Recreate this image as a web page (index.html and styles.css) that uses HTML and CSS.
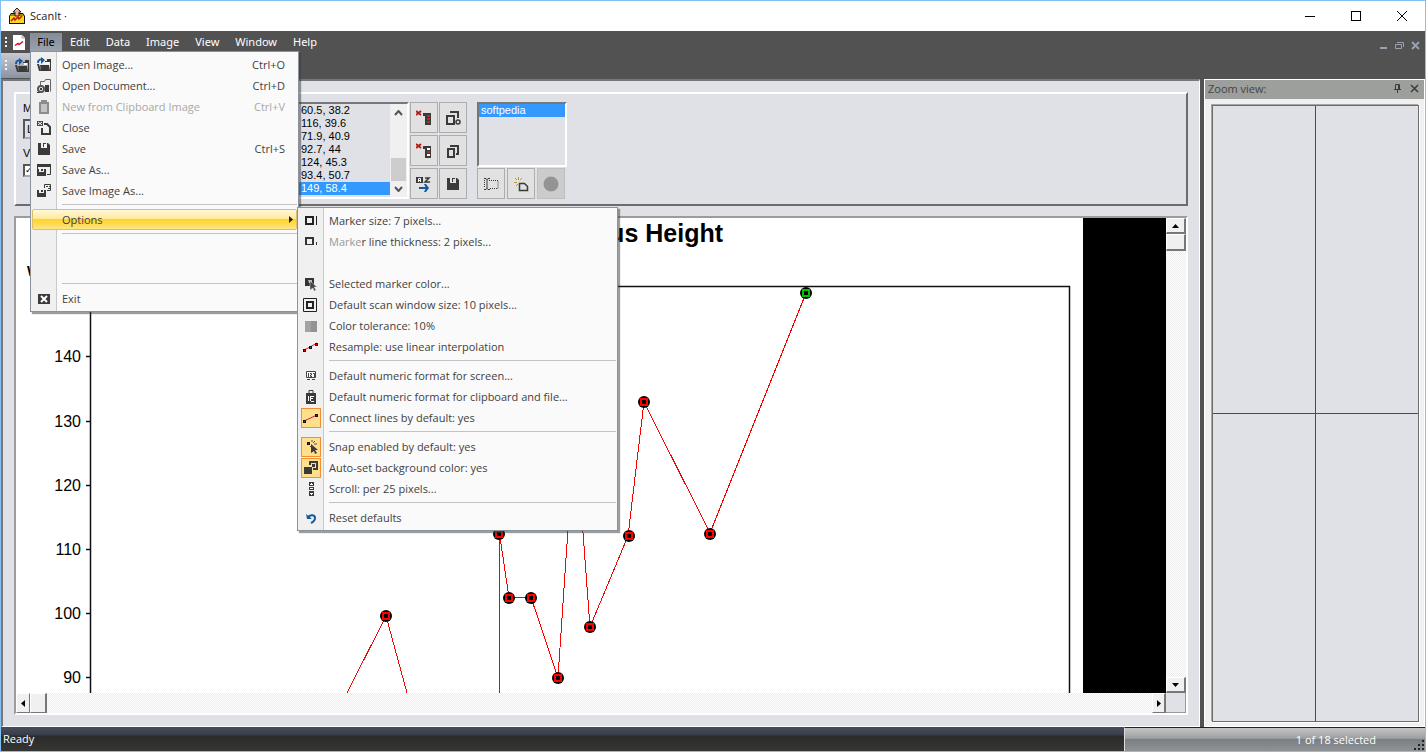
FILE: index.html
```html
<!DOCTYPE html>
<html lang="en">

<head>
    <meta charset="utf-8">
    <title>ScanIt</title>
    <link rel="stylesheet" href="styles.css">
</head>

<body>
    <div class="window">
        <header class="titlebar">
            <svg class="appicon" width="18" height="18" viewBox="0 0 18 18">
                <path d="M3 6h12l2 3v8H1V9z" fill="#111" />
                <path d="M3 7h12l1 2H2z" fill="#a08a10" />
                <rect x="2" y="9" width="14" height="7" fill="#f4dc1c" />
                <path d="M9 1l4 4h-2v4H7V5H5z" fill="#f3b08c" stroke="#222" />
                <path d="M3 14l3-3 1 2 3-3 1 2 3-3" fill="none" stroke="#d01010" stroke-width="1.5" />
            </svg>
            <span class="title">ScanIt ·</span>
            <div class="wincontrols">
                <button aria-label="Minimize"><svg width="12" height="12"><path d="M1 6.5h10" /></svg></button>
                <button aria-label="Maximize"><svg width="12" height="12"><rect x="1.500" y="1.500" width="9" height="9" /></svg></button>
                <button aria-label="Close"><svg width="12" height="12"><path d="M1 1l10 10M11 1L1 11" /></svg></button>
            </div>
        </header>

        <nav class="menubar">
            <span class="grip"></span>
            <svg class="docicon" width="12" height="15">
                <path d="M0 0h9l3 3v12H0z" fill="#fff" />
                <path d="M9 0v3h3" fill="none" stroke="#aaa" />
                <path d="M2 10.500l3-2 1 1 4-3" fill="none" stroke="#d01020" stroke-width="1.500" />
            </svg>
            <div class="filemenu">
                <button class="active">File</button>
                <ul class="menu">
                    <li><button class="item">
                        <svg class="icon" viewBox="0 0 16 16"><path d="M1 7h2l2 7H3zM4 8h9l1 6H5z" fill="#3a3a3a" /><path d="M9 5V4h2V2h4v12h-1V5z" fill="#3a3a3a" /><path d="M10 5h3v2h-3z" fill="#fafafa" /><path d="M2 6c0-4 3-4 5-3" fill="none" stroke="#1259a0" stroke-width="2" /><path d="M5 0l4 3-4 4z" fill="#1259a0" /></svg>
                        <span>Open Image...</span><kbd>Ctrl+O</kbd></button></li>
                    <li><button class="item">
                        <svg class="icon" viewBox="0 0 16 16"><path d="M4.500 8V3.500h4l1-2h5v12" fill="none" stroke="#666" /><path d="M9 7h4v7H9z" fill="#3a3a3a" /><circle cx="5" cy="11" r="3" fill="none" stroke="#555" stroke-width="2" /><path d="M4 10h2v2H4zM1 14h3v1H1z" fill="#3a3a3a" /></svg>
                        <span>Open Document...</span><kbd>Ctrl+D</kbd></button></li>
                    <li><button class="item" disabled>
                        <svg class="icon" viewBox="0 0 16 16"><path d="M4 4h8v10H4z" fill="#c4c4c4" stroke="#8c8c8c" stroke-width="2" /><path d="M6 4V2h4v2" fill="none" stroke="#8c8c8c" stroke-width="2" /></svg>
                        <span>New from Clipboard Image</span><kbd>Ctrl+V</kbd></button></li>
                    <li><button class="item">
                        <svg class="icon" viewBox="0 0 16 16"><path d="M1 1h6v5H1z" fill="#444" /><path d="M2 2l4 3M6 2L2 5" stroke="#fff" /><path d="M6 8v6h8V7l-3-3H8" fill="none" stroke="#3a3a3a" stroke-width="2" /></svg>
                        <span>Close</span></button></li>
                    <li><button class="item">
                        <svg class="icon" viewBox="0 0 16 16"><path d="M2 2h3v5h6V2h1l2 2v10H2zM7 2h3v4H7z" fill="#3a3a3a" fill-rule="evenodd" /><path d="M8 3h2v3H8z" fill="#fafafa" /></svg>
                        <span>Save</span><kbd>Ctrl+S</kbd></button></li>
                    <li><button class="item">
                        <svg class="icon" viewBox="0 0 16 16"><path d="M1 2h14v3H1z" fill="#3a3a3a" /><path d="M1.500 3v4M14.500 3v9.500H11" fill="none" stroke="#3a3a3a" /><path d="M1 7h2v3h5V7h2v7H1zM5 7h2v2H5z" fill="#3a3a3a" /></svg>
                        <span>Save As...</span></button></li>
                    <li><button class="item">
                        <svg class="icon" viewBox="0 0 16 16"><path d="M1 7h2v3h5V7h2v7H1zM5 7h2v2H5z" fill="#3a3a3a" /><path d="M8.500 5V1.500h6v6H11" fill="none" stroke="#3a3a3a" /><path d="M10 3h2v1h-2zM12 5h2v1h-2zM13 3h1v1h-1z" fill="#3a3a3a" /></svg>
                        <span>Save Image As...</span></button></li>
                    <li class="sep"></li>
                    <li class="parent"><button class="item selected"><span>Options</span>
                            <svg class="arrow" width="4" height="7"><path d="M0 0v7l4-3.500z" /></svg></button>
                        <ul class="menu submenu">
                            <li><button class="item">
                                <svg class="icon" viewBox="0 0 16 16"><path d="M3 4h7v7H3z" fill="none" stroke="#222" stroke-width="2" /><path d="M13 3h1v9h-1z" fill="#222" /></svg>
                                <span>Marker size: 7 pixels...</span></button></li>
                            <li><button class="item">
                                <svg class="icon" viewBox="0 0 16 16"><path d="M3 10V4h7v6" fill="none" stroke="#333" stroke-width="2" /><path d="M2 10h9v1H2zM13 8h1v3h-1z" fill="#333" /></svg>
                                <span><span class="faint">Marke</span>r line thickness: 2 pixels...</span></button></li>
                            <li class="blank"></li>
                            <li><button class="item">
                                <svg class="icon" viewBox="0 0 16 16"><path d="M2 2h9v8H2z" fill="#333" /><path d="M5 4h4v3H6z" fill="#bbb" /><path d="M7 5l7 6h-3l2 3-2 1-1-3-3 2z" fill="#444" stroke="#ddd" stroke-width=".5" /></svg>
                                <span>Selected marker color...</span></button></li>
                            <li><button class="item">
                                <svg class="icon" viewBox="0 0 16 16"><path d="M.5 1.500h13v13H.5z" fill="none" stroke="#222" /><path d="M4 5h6v6H4z" fill="none" stroke="#222" stroke-width="2" /></svg>
                                <span>Default scan window size: 10 pixels...</span></button></li>
                            <li><button class="item">
                                <svg class="icon" viewBox="0 0 16 16"><path d="M2 3h6v11H2z" fill="#a2a2a2" /><path d="M8 3h6v11H8z" fill="#939393" /></svg>
                                <span>Color tolerance: 10%</span></button></li>
                            <li><button class="item">
                                <svg class="icon" viewBox="0 0 16 16"><path d="M1 11l6-3 7-4" stroke="#e8103c" fill="none" /><path d="M0 10h3v3H0zM6 7h3v3H6zM12 4h3v3h-3z" fill="#111" /><path d="M1 11h1v1H1zM7 8h1v1H7zM13 5h1v1h-1z" fill="#e00" /></svg>
                                <span>Resample: use linear interpolation</span></button></li>
                            <li class="sep"></li>
                            <li><button class="item">
                                <svg class="icon" viewBox="0 0 16 16"><path d="M3.500 3.500h9v6h-9z" fill="#fff" stroke="#444" /><path d="M5.500 5v4M7 5.500h1.500v1.500H7.500v1.500H9M10 5.500h1.500V9" fill="none" stroke="#444" /><path d="M4 11h3v1H4zM9 11h3v1H9z" fill="#444" /></svg>
                                <span>Default numeric format for screen...</span></button></li>
                            <li><button class="item">
                                <svg class="icon" viewBox="0 0 16 16"><path d="M3 4h10v11H3z" fill="#3a3a3a" /><path d="M6 4V1.500h4V4" fill="none" stroke="#3a3a3a" /><path d="M5.500 7v5M7 7.500h4M7.500 8v4M8 9.500h2M8 12.500h3" fill="none" stroke="#fff" /></svg>
                                <span>Default numeric format for clipboard and file...</span></button></li>
                            <li><button class="item checked">
                                <svg class="icon" viewBox="0 0 16 16"><path d="M1 11l13-6" stroke="#e8103c" /><path d="M0 10h3v3H0zM12 4h3v3h-3z" fill="#111" /><path d="M1 11h1v1H1zM13 5h1v1h-1z" fill="#e00" /></svg>
                                <span>Connect lines by default: yes</span></button></li>
                            <li class="sep"></li>
                            <li><button class="item checked">
                                <svg class="icon" viewBox="0 0 16 16"><path d="M4 3h3v3H4z" fill="#111" /><path d="M5 4h1v1H5z" fill="#e00" /><path d="M9 1v2M12 2l-2 2M11 5h3M8 7l-1 1" stroke="#555" /><path d="M8 5l7 6h-3l2 3-2 1-1-3-3 2z" fill="#3a3a3a" /></svg>
                                <span>Snap enabled by default: yes</span></button></li>
                            <li><button class="item checked">
                                <svg class="icon" viewBox="0 0 16 16"><path d="M7 5V2h7v7h-4" fill="none" stroke="#3a3a3a" stroke-width="2" /><path d="M9 4h3v3H9z" fill="#3a3a3a" /><path d="M1 7h8v7H1z" fill="#3a3a3a" /></svg>
                                <span>Auto-set background color: yes</span></button></li>
                            <li><button class="item">
                                <svg class="icon" viewBox="0 0 16 16"><path d="M6 1h5v4H6zM6 6h5v3H6zM6 10h5v5H6z" fill="#3a3a3a" /><path d="M8 2h1v1h1v1H7V3h1zM7 7h3v1H7zM7 12h3v1H9v1H8v-1H7z" fill="#fff" /></svg>
                                <span>Scroll: per 25 pixels...</span></button></li>
                            <li class="sep"></li>
                            <li><button class="item">
                                <svg class="icon" viewBox="0 0 16 16"><path d="M5 7c3-3 7-2 7 1s-2 4-4 5" fill="none" stroke="#1259a0" stroke-width="2" /><path d="M3 4l1 5h5z" fill="#1259a0" /></svg>
                                <span>Reset defaults</span></button></li>
                        </ul>
                    </li>
                    <li class="sep"></li>
                    <li class="blank"></li>
                    <li class="blank"></li>
                    <li class="sep"></li>
                    <li><button class="item">
                        <svg class="icon" viewBox="0 0 16 16"><path d="M2 3h12v10H2z" fill="#3a3a3a" /><path d="M5 5l6 6M11 5l-6 6" stroke="#fff" stroke-width="2" /></svg>
                        <span>Exit</span></button></li>
                </ul>
            </div>
            <button>Edit</button>
            <button>Data</button>
            <button>Image</button>
            <button>View</button>
            <button>Window</button>
            <button>Help</button>
            <div class="mdicontrols">
                <button aria-label="Minimize document"><svg width="9" height="9"><path d="M1 7h7" stroke-width="2" /></svg></button>
                <button aria-label="Restore document"><svg width="9" height="9"><path d="M.5 3.500h6v4h-6zM2 1.500h6.500V6" /></svg></button>
                <button aria-label="Close document"><svg width="9" height="9"><path d="M1 1l7 7M8 1L1 8" stroke-width="2" /></svg></button>
            </div>
        </nav>

        <div class="toolbar">
            <div class="tools">
                <span class="grip"></span>
                <button aria-label="Open image"><svg class="icon" viewBox="0 0 16 16"><path d="M1 7h2l2 7H3zM4 8h9l1 6H5z" fill="#3a3a3a" /><path d="M9 5V4h2V2h4v12h-1V5z" fill="#3a3a3a" /><path d="M10 5h3v2h-3z" fill="#fafafa" /><path d="M2 6c0-4 3-4 5-3" fill="none" stroke="#1259a0" stroke-width="2" /><path d="M5 0l4 3-4 4z" fill="#1259a0" /></svg></button>
            </div>
        </div>

        <main class="workspace">
            <section class="document">
                <div class="panel">
                    <div class="fields">
                        <label for="method">Method:</label>
                        <input type="text" id="method" value="Line">
                        <label for="visible">Visible:</label>
                        <input type="checkbox" id="visible" checked>
                    </div>
                    <div class="points">
                        <ul>
                            <li>60.5, 38.2</li>
                            <li>116, 39.6</li>
                            <li>71.9, 40.9</li>
                            <li>92.7, 44</li>
                            <li>124, 45.3</li>
                            <li>93.4, 50.7</li>
                            <li class="current">149, 58.4</li>
                        </ul>
                        <div class="listscroll">
                            <svg width="9" height="6"><path d="M1 5l3.500-4L8 5" /></svg>
                            <span class="listthumb"></span>
                            <svg width="9" height="6"><path d="M1 1l3.500 4L8 1" /></svg>
                        </div>
                    </div>
                    <div class="pointbtns">
                        <button aria-label="Delete point"><svg class="icon" viewBox="0 0 16 16"><path d="M0 1l5 4M5 1L0 5" stroke="#b02018" stroke-width="2" /><path d="M7 3h8v12H9V6H7z" fill="#3a3a3a" /><path d="M11 5h3v2h-3zM11 8h3v2h-3zM11 11h3v2h-3z" fill="#c02818" /></svg></button>
                        <button aria-label="Copy settings"><svg class="icon" viewBox="0 0 16 16"><path d="M6 3V2h7v6M2 6h7v8H2z" fill="none" stroke="#3a3a3a" stroke-width="2" /><circle cx="13" cy="12" r="2" fill="#ddd" stroke="#3a3a3a" stroke-width="1.500" /></svg></button>
                        <button aria-label="Delete points"><svg class="icon" viewBox="0 0 16 16"><path d="M0 1l5 4M5 1L0 5" stroke="#b02018" stroke-width="2" /><path d="M7 3h8v12H9V6H7z" fill="#3a3a3a" /><path d="M11 5h3v2h-3zM11 11h3v2h-3z" fill="#fff" /><path d="M11 8h3v2h-3z" fill="#c02818" /></svg></button>
                        <button aria-label="Copy"><svg class="icon" viewBox="0 0 16 16"><path d="M6 4V3h7v8h-2M3 6h6v8H3z" fill="none" stroke="#3a3a3a" stroke-width="2" /></svg></button>
                        <button aria-label="Sort"><svg class="icon" viewBox="0 0 16 16"><path d="M0 1h7v6H0z" fill="#3a3a3a" /><path d="M2.500 6V2.500h2V6M2 4.500h3" fill="none" stroke="#fff" /><path d="M9 2h4l-4 4h5" fill="none" stroke="#3a3a3a" stroke-width="1.500" /><path d="M3 12h8" stroke="#1259a0" stroke-width="2" /><path d="M8 8h2l3 4-3 4H8l2-4z" fill="#1259a0" /></svg></button>
                        <button aria-label="Save points"><svg class="icon" viewBox="0 0 16 16"><path d="M2 2h3v5h6V2h1l2 2v10H2zM7 2h3v4H7z" fill="#3a3a3a" /><path d="M8 3h2v3H8z" fill="#ddd" /></svg></button>
                    </div>
                    <div class="series">
                        <ul>
                            <li class="current">softpedia</li>
                        </ul>
                        <div class="seriesbtns">
                            <button aria-label="Rename"><svg class="icon" viewBox="0 0 16 16"><path d="M1 2.500h2l1 1 1-1h2M4 3v10M1 13.500h2l1-1 1 1h2" fill="none" stroke="#3a3a3a" /><path d="M1.500 4v8M6 4.500h9v8H6" fill="none" stroke="#3a3a3a" stroke-dasharray="1 1" /></svg></button>
                            <button aria-label="New series"><svg class="icon" viewBox="0 0 16 16"><path d="M6.500 7.500h5l3 3v4h-8z" fill="none" stroke="#3a3a3a" stroke-width="1.500" /><path d="M5.500 1v3M2 2l2 2M1 6.500h3M3 10l2-2M9 2L7 4" stroke="#c8922c" /></svg></button>
                            <button aria-label="Series color" disabled><svg class="icon" viewBox="0 0 16 16"><circle cx="8" cy="8" r="7.500" fill="#949494" /></svg></button>
                        </div>
                    </div>
                </div>

                <div class="canvas">
                    <div class="view">
                        <svg class="chart" width="1067" height="100%">
                            <text class="charttitle" x="707" y="24" text-anchor="end">Weight Versus Height</text>
                            <text class="axistitle" x="11" y="58">Weight</text>
                            <g class="axis">
                                <path d="M74.500 68V800" />
                                <path d="M74 68.500H1053.500V800" />
                                <path d="M70 138.500h4M70 203.500h4M70 267.500h4M70 331.500h4M70 395.500h4M70 459.500h4" />
                            </g>
                            <g class="ticks" text-anchor="end">
                                <text x="65" y="144">140</text>
                                <text x="65" y="209">130</text>
                                <text x="65" y="273">120</text>
                                <text x="65" y="337">110</text>
                                <text x="65" y="401">100</text>
                                <text x="65" y="465">90</text>
                            </g>
                            <g class="lines">
                                <path d="M331 475L370 398L391 475" />
                                <path d="M483.500 316V800" />
                                <path d="M483.500 316L493 379.500H515L542 459.500L559 207L574 409L612 318L628 184L694 315L790 75" />
                            </g>
                            <g class="marks">
                                <g transform="translate(370 398)"><circle r="6" /><path d="M-3-3h6v6h-6z" /></g>
                                <g transform="translate(483 316)"><circle r="6" /><path d="M-3-3h6v6h-6z" /></g>
                                <g transform="translate(493 380)"><circle r="6" /><path d="M-3-3h6v6h-6z" /></g>
                                <g transform="translate(515 380)"><circle r="6" /><path d="M-3-3h6v6h-6z" /></g>
                                <g transform="translate(542 460)"><circle r="6" /><path d="M-3-3h6v6h-6z" /></g>
                                <g transform="translate(574 409)"><circle r="6" /><path d="M-3-3h6v6h-6z" /></g>
                                <g transform="translate(613 318)"><circle r="6" /><path d="M-3-3h6v6h-6z" /></g>
                                <g transform="translate(628 184)"><circle r="6" /><path d="M-3-3h6v6h-6z" /></g>
                                <g transform="translate(694 316)"><circle r="6" /><path d="M-3-3h6v6h-6z" /></g>
                                <g class="last" transform="translate(790 75)"><circle r="6" /><path d="M-3-3h6v6h-6z" /></g>
                            </g>
                        </svg>
                    </div>
                    <div class="scroll vertical">
                        <button aria-label="Scroll up"><svg width="7" height="4"><path d="M0 4h7L3.500 0z" /></svg></button>
                        <span class="thumb"></span>
                        <span class="track"></span>
                        <button aria-label="Scroll down"><svg width="7" height="4"><path d="M0 0h7L3.500 4z" /></svg></button>
                    </div>
                    <div class="scroll horizontal">
                        <button aria-label="Scroll left"><svg width="4" height="7"><path d="M4 0v7L0 3.500z" /></svg></button>
                        <span class="thumb"></span>
                        <span class="track"></span>
                        <button aria-label="Scroll right"><svg width="4" height="7"><path d="M0 0v7l4-3.500z" /></svg></button>
                    </div>
                    <div class="corner"></div>
                </div>
            </section>

            <aside class="zoompane">
                <div class="zoomhead">
                    <span>Zoom view:</span>
                    <button aria-label="Pin"><svg width="9" height="9"><path d="M2.500 5V.5h4V5M1 5.500h7M4.500 5v4M5.500 1v4" /></svg></button>
                    <button aria-label="Close zoom view"><svg width="9" height="9"><path d="M1 1l7 7M8 1L1 8" stroke-width="1.500" /></svg></button>
                </div>
                <div class="zoomview"></div>
            </aside>
        </main>

        <footer class="statusbar">
            <span class="ready">Ready</span>
            <div class="selection">
                <span>1 of 18 selected</span>
                <svg width="12" height="12"><path d="M9 1h2v2H9zM9 5h2v2H9zM5 5h2v2H5zM9 9h2v2H9zM5 9h2v2H5zM1 9h2v2H1z" /></svg>
            </div>
        </footer>
    </div>
</body>

</html>
```
FILE: styles.css
```css
* {
    box-sizing: border-box;
    margin: 0;
    padding: 0;
}

body {
    font-family: "Open Sans", "Noto Sans", sans-serif;
    font-size: 11px;
    line-height: 16px;
    color: #3c3c3c;
}

ul {
    list-style: none;
}

button {
    font: inherit;
    color: inherit;
    background: none;
    border: 0;
}

svg {
    display: block;
    flex: none;
}

.icon {
    width: 16px;
    height: 16px;
}

.window {
    height: 100vh;
    display: flex;
    flex-direction: column;
    background: #525252;
    border: 1px solid #84bff2;
    overflow: hidden;
}

/* title bar */
.titlebar {
    height: 30px;
    flex: none;
    display: flex;
    align-items: center;
    padding-left: 7px;
    gap: 4px;
    background: #fff;
    color: #222;
}

.wincontrols {
    display: flex;
    margin-left: auto;
}

.wincontrols button {
    width: 46px;
    height: 28px;
    display: flex;
    align-items: center;
    justify-content: center;
}

.wincontrols svg {
    fill: none;
    stroke: #000;
}

/* menu bar */
.menubar {
    height: 22px;
    flex: none;
    display: flex;
    align-items: center;
    padding-left: 4px;
    font-family: "Noto Sans", sans-serif;
    color: #fff;
}

.menubar button {
    height: 18px;
    padding: 0 8px;
}

.grip {
    width: 2px;
    height: 11px;
    background: repeating-linear-gradient(#f4f4f4 0 2px, transparent 2px 4px);
}

.docicon {
    margin: 0 5px 0 6px;
}

.filemenu {
    position: relative;
    z-index: 5;
}

.menubar .active {
    display: block;
    width: 32px;
    padding: 0;
    color: #000;
    background: linear-gradient(#858c99, #9aa2ae);
}

.mdicontrols {
    display: flex;
    margin-left: auto;
    padding: 6px 5px 0 0;
    gap: 7px;
}

.mdicontrols button {
    height: 9px;
    padding: 0;
}

.mdicontrols svg {
    fill: none;
    stroke: #98a1ae;
}

/* drop down menus */
.menu {
    position: absolute;
    left: 0;
    top: 100%;
    width: 269px;
    padding: 2px 1px;
    font-family: "Open Sans", "Noto Sans", sans-serif;
    color: #3f3f3f;
    background: linear-gradient(90deg, #f0f0f0 25px, #c9c9c9 25px 26px, #fafafa 26px);
    border: 1px solid #8a929e;
    box-shadow: 2px 2px 1px rgba(60, 60, 60, .5);
}

.submenu {
    left: 100%;
    top: -2px;
    width: 321px;
}

.parent {
    position: relative;
}

.menu .item {
    width: 100%;
    height: 21px;
    display: flex;
    align-items: center;
    padding: 0 12px 0 4px;
    gap: 10px;
    text-align: left;
}

.menu .item:disabled {
    color: #a8a8a8;
}

.menu .selected {
    padding: 0 3px 0 29px;
    border: 1px solid #dcc069;
    border-radius: 2px;
    background: linear-gradient(#fff9dc, #ffe99a 45%, #ffd329 50%, #ffe584);
}

.arrow {
    margin-left: auto;
    fill: #222;
}

kbd {
    font: inherit;
    margin-left: auto;
}

.checked .icon {
    background: #ffdf8c;
    outline: 1px solid #ffdf8c;
    box-shadow: 0 0 0 2px #f09030;
}

.faint {
    color: #999;
}

.blank {
    height: 21px;
}

.sep {
    height: 8px;
    padding: 3px 0 0 30px;
}

.sep::before {
    content: "";
    display: block;
    height: 1px;
    background: #c2c2c2;
}

/* toolbar */
.toolbar {
    height: 26px;
    flex: none;
}

.tools {
    width: 180px;
    height: 25px;
    display: flex;
    align-items: center;
    padding-left: 4px;
    background: linear-gradient(#c6cad2, #8b93a0);
}

.tools button {
    margin-left: 7px;
}

/* workspace */
.workspace {
    flex: 1;
    min-height: 0;
    display: flex;
    gap: 4px;
}

.document {
    flex: 1;
    min-width: 0;
    display: flex;
    flex-direction: column;
    gap: 10px;
    padding: 11px;
    background: #e0e1e6;
    border-top: 2px solid #777;
    border-left: 2px solid #777;
    border-right: 1px solid #fff;
    border-bottom: 1px solid #fff;
}

.panel {
    height: 114px;
    flex: none;
    display: flex;
    gap: 1px;
    padding: 8px 7px;
    border: 2px solid #fff;
    border-right-color: #6c6c6c;
    border-bottom-color: #6c6c6c;
    font-family: "Liberation Sans", Arial, sans-serif;
    line-height: 13px;
    color: #000;
}

.fields {
    width: 191px;
    display: flex;
    flex-direction: column;
    align-items: flex-start;
    gap: 4px;
}

.fields input[type="text"] {
    width: 160px;
    height: 20px;
    margin-bottom: 4px;
    padding-left: 2px;
    font: inherit;
    background: #e0e1e6;
    border: 2px inset #aaa;
}

.fields input[type="checkbox"] {
    appearance: none;
    width: 13px;
    height: 13px;
    background: #fff;
    border: 2px inset #aaa;
}

.fields input[type="checkbox"]:checked::before {
    content: "✓";
    display: block;
    font: bold 9px/9px "DejaVu Sans", sans-serif;
}

.points {
    width: 194px;
    height: 97px;
    display: flex;
    border: 2px solid #777;
    border-right-color: #fff;
    border-bottom-color: #fff;
}

.points ul {
    flex: 1;
}

.points li {
    padding-left: 84px;
}

.current {
    color: #fff;
    background: #3399ff;
}

.listscroll {
    width: 17px;
    display: flex;
    flex-direction: column;
    align-items: center;
    padding: 6px 0 5px;
    background: #f0f0f0;
}

.listscroll svg {
    fill: none;
    stroke: #555;
    stroke-width: 2;
}

.listthumb {
    width: 15px;
    height: 23px;
    margin: auto 0 5px;
    background: #cdcdcd;
}

.pointbtns {
    display: grid;
    grid-template-columns: 28px 28px;
    gap: 2px 1px;
    align-content: start;
}

.panel button {
    width: 28px;
    height: 31px;
    display: flex;
    align-items: center;
    justify-content: center;
    background: #e1e1e1;
    border: 1px solid #adadad;
}

.panel button:disabled {
    background: #cccccc;
    border-color: #bfbfbf;
}

.series {
    margin-left: 9px;
}

.series ul {
    width: 90px;
    height: 65px;
    border: 2px solid #777;
    border-right-color: #fff;
    border-bottom-color: #fff;
}

.series li {
    padding-left: 2px;
}

.seriesbtns {
    display: flex;
    gap: 2px;
    padding-top: 1px;
}

/* scanned image */
.canvas {
    flex: 1;
    min-height: 0;
    display: grid;
    grid-template-columns: 1fr 20px;
    grid-template-rows: 1fr 20px;
    border: 2px solid #9c9c9c;
    border-right-color: #fff;
    border-bottom-color: #fff;
}

.view {
    min-width: 0;
    min-height: 0;
    overflow: hidden;
    background: #000;
}

.chart {
    background: #fff;
    font-family: "Liberation Sans", Arial, sans-serif;
}

.charttitle {
    font-size: 25px;
    font-weight: bold;
}

.axistitle {
    font-size: 14px;
    font-weight: bold;
}

.ticks {
    font-size: 16px;
}

.axis path {
    fill: none;
    stroke: #111;
    stroke-width: 1.5;
}

.lines path {
    fill: none;
    stroke: #f00;
    shape-rendering: crispEdges;
}

.marks path {
    fill: #000;
    stroke: #f00;
    stroke-width: 2;
}

.marks .last path {
    stroke: #00c000;
}

.scroll {
    display: flex;
    background: repeating-conic-gradient(#fff 0 25%, #ececec 0 50%) 0 0 / 2px 2px;
}

.scroll.vertical {
    flex-direction: column;
}

.scroll button,
.thumb {
    width: 20px;
    height: 16px;
    display: flex;
    align-items: center;
    justify-content: center;
    background: #f0f0f0;
    border: 1px solid #fff;
    border-right: 2px solid #777;
    border-bottom: 2px solid #777;
}

.vertical .thumb {
    height: 17px;
}

.horizontal button,
.horizontal .thumb {
    width: 14px;
    height: 20px;
    border-bottom-width: 1px;
}

.horizontal .thumb {
    width: 17px;
}

.horizontal button:first-child {
    border-right-width: 1px;
}

.track {
    flex: 1;
}

.corner {
    border: 1px solid #999;
    border-top: 0;
    border-left: 0;
    background: #e0e1e6;
}

/* zoom view */
.zoompane {
    width: 221px;
    display: flex;
    flex-direction: column;
    background: #f0f0f0;
    border: 1px solid #fff;
}

.zoomhead {
    height: 19px;
    display: flex;
    align-items: center;
    gap: 8px;
    padding: 0 5px 2px 3px;
    background: #9d9f9d;
    color: #444;
}

.zoomhead span {
    flex: 1;
}

.zoomhead svg {
    fill: none;
    stroke: #3c3c3c;
}

.zoomview {
    flex: 1;
    margin: 6px 5px 4px 7px;
    background:
        linear-gradient(#f00, #f00) center / 1px 100% no-repeat,
        linear-gradient(#f00, #f00) center / 100% 1px no-repeat,
        #e0e1e6;
    border: 1px solid #6c6c6c;
    box-shadow: -1px -1px 0 #a5a5a5, 1px 1px 0 #fff;
}

/* status bar */
.statusbar {
    height: 24px;
    flex: none;
    display: flex;
    color: #fff;
    background: linear-gradient(#454a58 0 2px, #393c48 8px, #2b2b2b 9px, #353533);
}

.ready {
    flex: 1;
    padding: 4px 2px;
}

.selection {
    width: 301px;
    display: flex;
    align-items: center;
    justify-content: flex-end;
    gap: 37px;
    border-top: 1px solid #222;
    border-left: 1px solid #ddd;
    background: linear-gradient(#c4c4c4, #9c9fa1 45%, #7b8085 50%, #8e9295);
}

.selection svg {
    align-self: flex-end;
    fill: #222;
}
```
